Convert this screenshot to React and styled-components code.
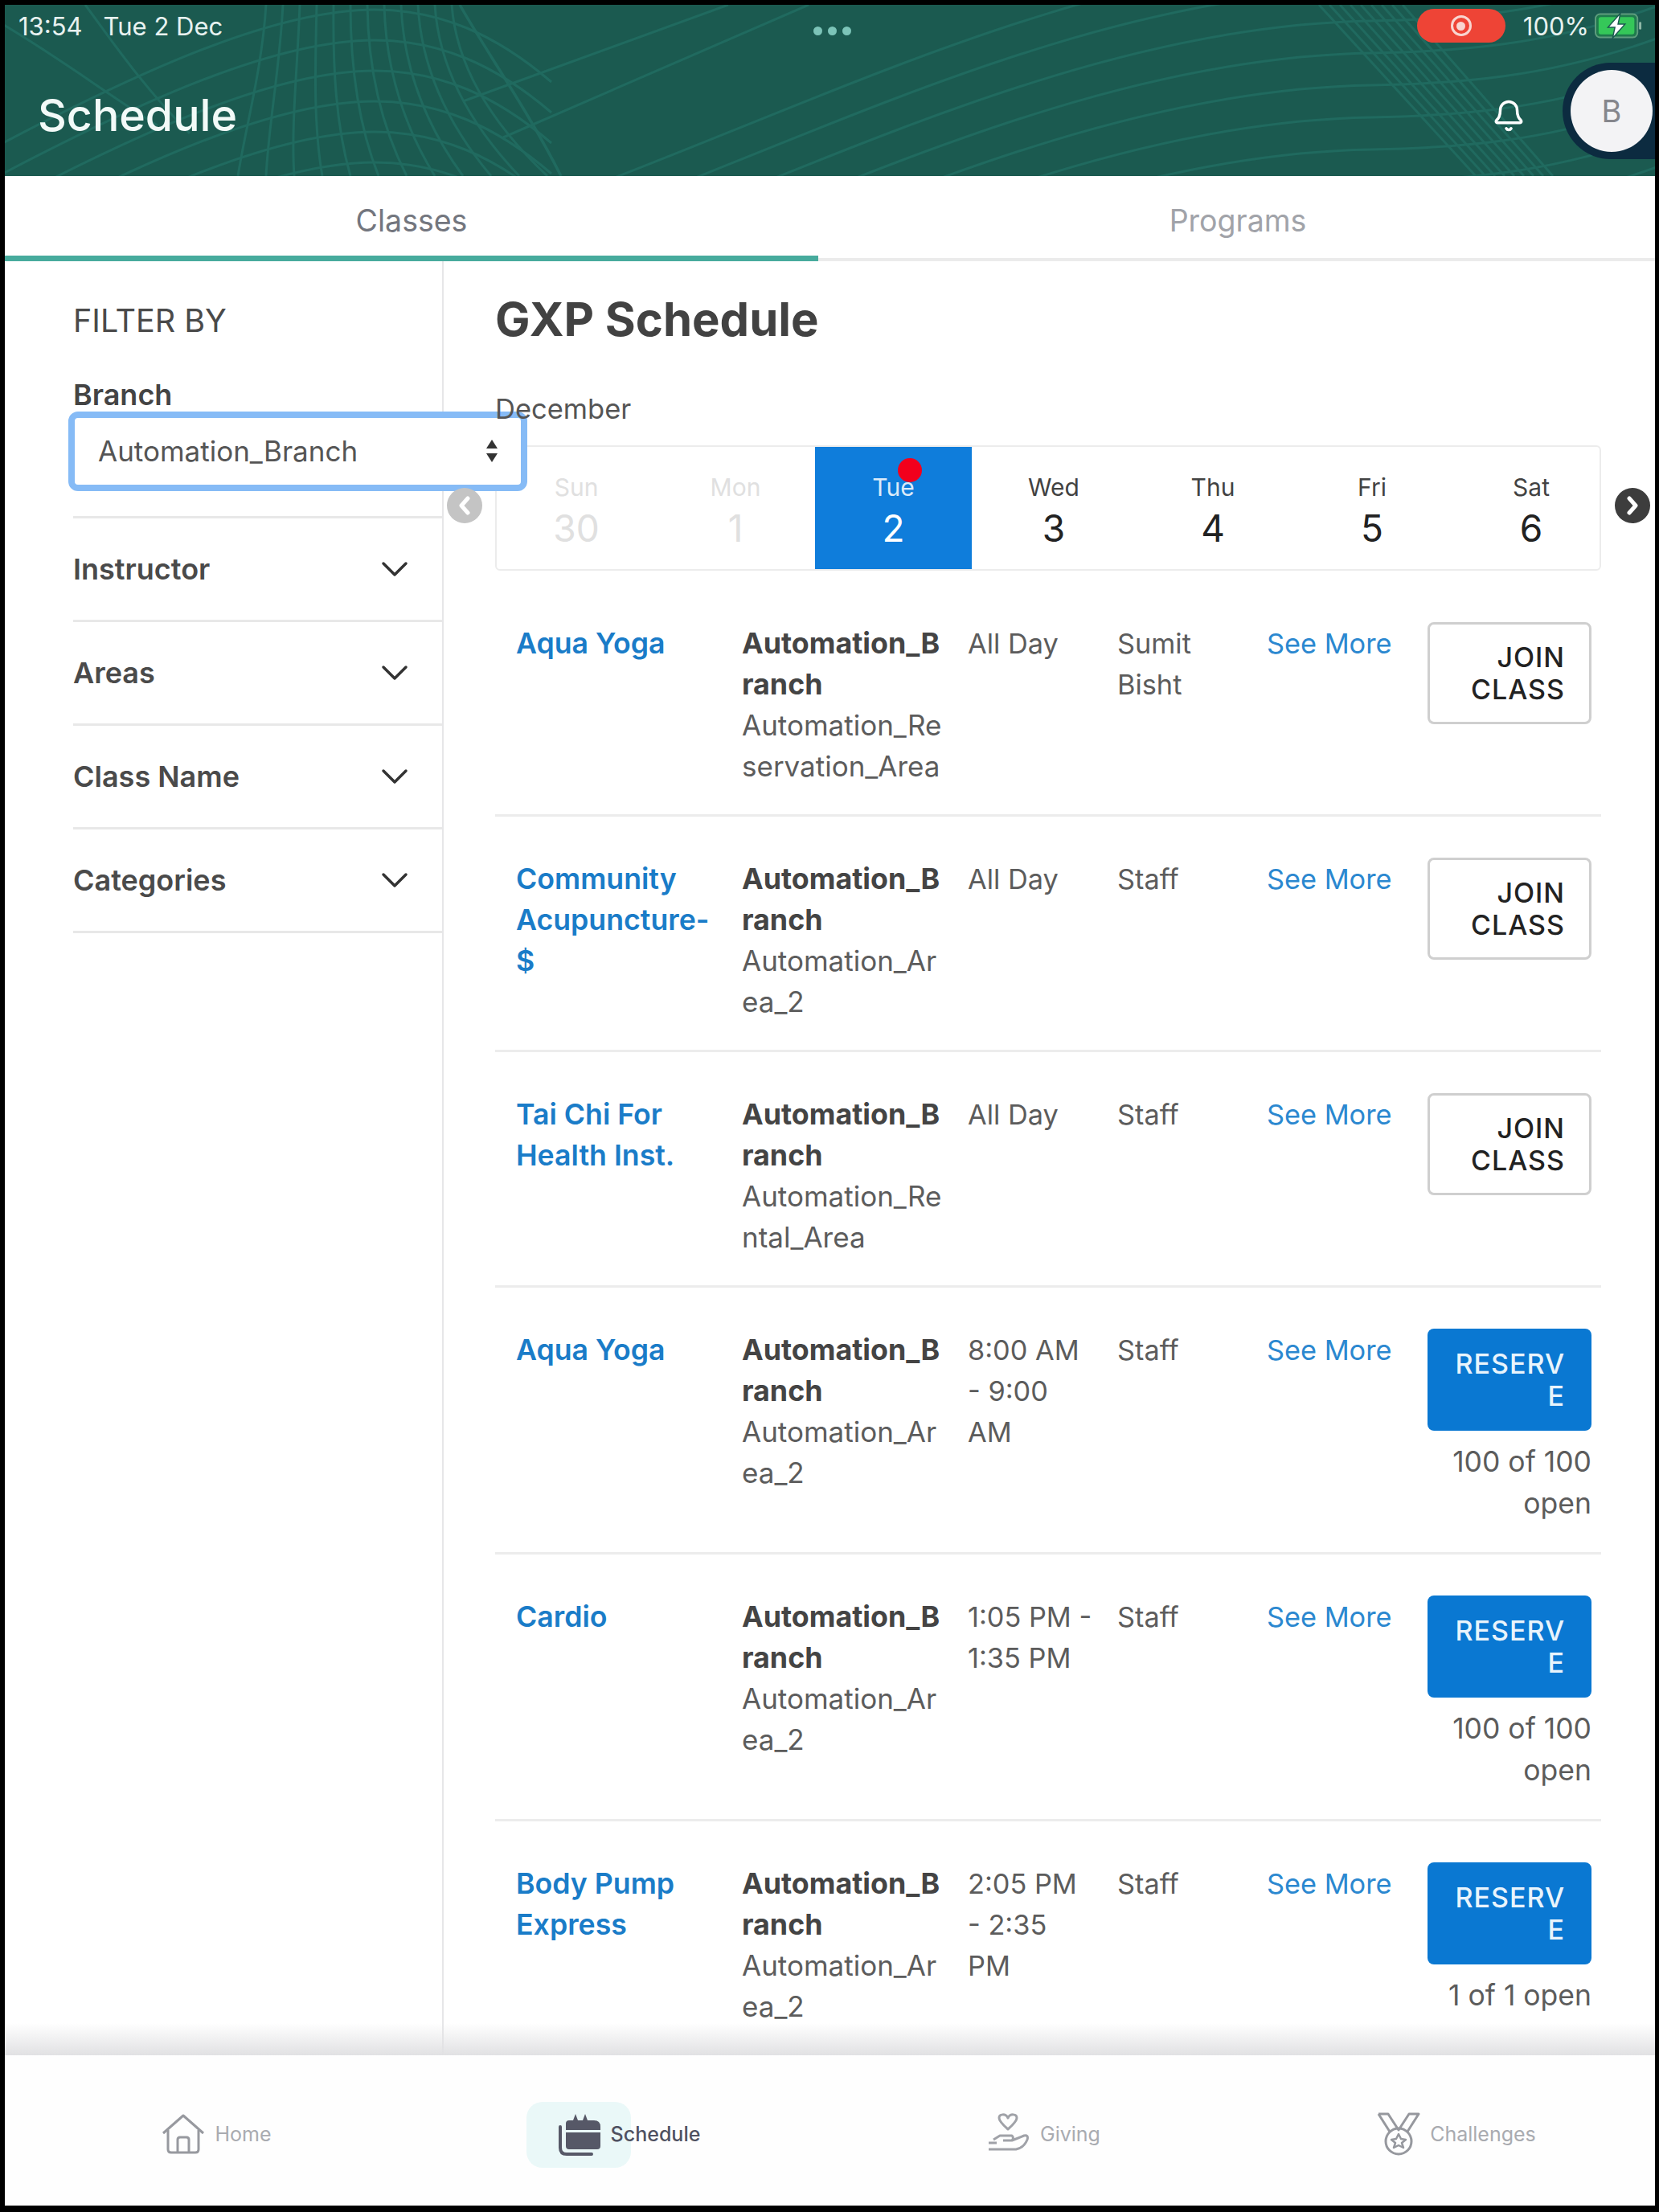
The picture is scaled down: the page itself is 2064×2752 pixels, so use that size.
import React from "react";
import styled, { createGlobalStyle } from "styled-components";
import { Bell, ChevronDown } from "lucide-react";

const GlobalStyle = createGlobalStyle`
  html, body {
    margin: 0;
    padding: 0;
    background: #000;
  }
  * {
    box-sizing: border-box;
  }
`;

const Page = styled.div`
  width: 2064px;
  height: 2752px;
  background: #000;
  padding: 6px 5px 8px 6px;
  font-family: Inter, "Liberation Sans", sans-serif;
`;

const Screen = styled.div`
  width: 100%;
  height: 100%;
  background: #fff;
  display: flex;
  flex-direction: column;
  overflow: hidden;
  position: relative;
`;

const Header = styled.header`
  height: 213px;
  flex-shrink: 0;
  background: #1b5a50;
  position: relative;
  overflow: hidden;
  color: #fff;
`;

const HeaderArt = styled.svg`
  position: absolute;
  top: 0;
  left: 0;
  width: 100%;
  height: 100%;
`;

const StatusBar = styled.div`
  position: relative;
  height: 52px;
  padding: 0 15px 0 17px;
  display: flex;
  align-items: center;
  font-size: 31px;
  color: #e8f2f0;
`;

const StatusDate = styled.span`
  margin-left: 26px;
`;

const Dots = styled.div`
  position: absolute;
  left: 1006px;
  top: 27px;
  display: flex;
  gap: 7px;
`;

const Dot = styled.span`
  width: 11px;
  height: 11px;
  border-radius: 50%;
  background: #7cc4b8;
`;

const StatusRight = styled.div`
  margin-left: auto;
  display: flex;
  align-items: center;
`;

const RecordPill = styled.div`
  width: 110px;
  height: 42px;
  border-radius: 21px;
  background: #ee4436;
  display: flex;
  align-items: center;
  justify-content: center;
  margin-right: 22px;
`;

const RecordIcon = styled.span`
  width: 26px;
  height: 26px;
  border-radius: 50%;
  border: 3px solid #f9d5d0;
  display: flex;
  align-items: center;
  justify-content: center;
  &::after {
    content: "";
    width: 11px;
    height: 11px;
    border-radius: 50%;
    background: #f9d5d0;
  }
`;

const Battery = styled.svg`
  width: 60px;
  height: 32px;
  margin-left: 7px;
`;

const TitleBar = styled.div`
  position: relative;
  height: 161px;
  display: flex;
  align-items: flex-start;
  padding: 50px 0 0 41px;
`;

const Title = styled.h1`
  margin: 0;
  font-size: 55.5px;
  line-height: 70px;
  font-weight: 500;
  color: #f2faf8;
`;

const BellWrap = styled.div`
  position: absolute;
  left: 1850px;
  top: 65px;
  line-height: 0;
`;

const AvatarShell = styled.div`
  position: absolute;
  right: 0;
  top: 20px;
  width: 115px;
  height: 120px;
  background: #0c2b40;
  border-radius: 60px 0 0 60px;
  display: flex;
  align-items: center;
  padding-left: 10px;
`;

const Avatar = styled.div`
  width: 102px;
  height: 102px;
  border-radius: 50%;
  background: #f3f3f5;
  color: #85868c;
  font-size: 38px;
  display: flex;
  align-items: center;
  justify-content: center;
`;

const Tabs = styled.nav`
  height: 106px;
  flex-shrink: 0;
  display: grid;
  grid-template-columns: 1012px 1fr;
`;

const Tab = styled.div`
  display: flex;
  align-items: center;
  justify-content: center;
  font-size: 37.5px;
  padding-top: ${({ $active }) => ($active ? "12px" : "9px")};
  padding-left: ${({ $active }) => ($active ? "0" : "3px")};
  color: ${({ $active }) => ($active ? "#73767e" : "#a1a3a9")};
  border-bottom: ${({ $active }) =>
    $active ? "7px solid #47ab9d" : "4px solid #ebebeb"};
`;

const Body = styled.div`
  flex: 1;
  display: flex;
  min-height: 0;
`;

const Sidebar = styled.aside`
  width: 546px;
  flex-shrink: 0;
  border-right: 2px solid #e6e6e8;
  padding: 52px 0 0 85px;
`;

const FilterHeading = styled.div`
  font-size: 39.5px;
  line-height: 44px;
  color: #4a4a4a;
`;

const BranchLabel = styled.div`
  margin-top: 48px;
  font-size: 36px;
  line-height: 44px;
  font-weight: 600;
  color: #444;
`;

const SelectBox = styled.div`
  position: relative;
  z-index: 2;
  width: 571px;
  height: 99px;
  margin: -1px 0 0 -6px;
  border: 8px solid #86bbf6;
  border-radius: 12px;
  background: #fff;
  display: flex;
  align-items: center;
  justify-content: space-between;
  padding: 0 27px 2px 29px;
  font-size: 35px;
  color: #555;
`;

const SelectArrows = styled.svg`
  width: 18px;
  height: 30px;
`;

const FilterList = styled.div`
  margin-top: 31px;
  border-top: 3px solid #e8e8e8;
`;

const FilterRow = styled.div`
  height: 129px;
  padding: 0 31px 0 0;
  display: flex;
  align-items: center;
  justify-content: space-between;
  border-bottom: 3px solid #e8e8e8;
  font-size: 36px;
  font-weight: 600;
  color: #4a4a4a;
`;

const Main = styled.main`
  flex: 1;
  min-width: 0;
  padding: 0 0 0 64px;
`;

const Heading = styled.h2`
  margin: 0;
  padding-top: 38px;
  font-size: 58px;
  line-height: 68px;
  font-weight: 700;
  color: #424242;
`;

const Month = styled.div`
  position: relative;
  z-index: 3;
  margin-top: 58px;
  font-size: 34.5px;
  line-height: 40px;
  color: #555;
`;

const Calendar = styled.div`
  position: relative;
  width: 1376px;
  height: 156px;
  margin-top: 25px;
  border: 2px solid #ececec;
  border-radius: 6px;
  display: grid;
  grid-template-columns: repeat(7, 198px);
`;

const ArrowButton = styled.span`
  position: absolute;
  top: 51px;
  width: 44px;
  height: 44px;
  border-radius: 50%;
  background: ${({ $muted }) => ($muted ? "#c4c4c4" : "#3d3d3d")};
  display: flex;
  align-items: center;
  justify-content: center;
  ${({ $muted }) => ($muted ? "left: -62px;" : "right: -63px;")}
  z-index: 3;
`;

const Day = styled.div`
  position: relative;
  display: flex;
  flex-direction: column;
  align-items: center;
  padding-top: 32px;
  margin-right: ${({ $selected }) => ($selected ? "3px" : "0")};
  background: ${({ $selected }) => ($selected ? "#0f7ddb" : "transparent")};
  color: ${({ $selected, $past }) =>
    $selected ? "#fff" : $past ? "#e0e0e0" : "#222"};
`;

const DayName = styled.span`
  font-size: 30px;
  line-height: 36px;
  opacity: ${({ $past }) => ($past ? 1 : 0.85)};
`;

const DayNumber = styled.span`
  margin-top: 6px;
  font-size: 46px;
  line-height: 54px;
`;

const RedDot = styled.span`
  position: absolute;
  left: 103px;
  top: 14px;
  width: 30px;
  height: 30px;
  border-radius: 50%;
  background: #f2001c;
`;

const Schedule = styled.div`
  width: 1376px;
  margin-top: 13px;
`;

const Row = styled.div`
  display: grid;
  grid-template-columns: 281px 281px 186px 186px 200px 204px;
  padding: 52px 12px 34px 26px;
  border-bottom: 3px solid #ececec;
  font-size: 34.3px;
  line-height: 51px;
  color: #5c5c5c;
  white-space: pre-line;
`;

const ClassName = styled.div`
  font-size: 35.7px;
  font-weight: 600;
  color: #1a7cc8;
`;

const Branch = styled.div`
  font-size: 35.8px;
  font-weight: 700;
  color: #444;
`;

const AreaName = styled.div`
  font-size: 35px;
`;

const SeeMore = styled.div`
  color: #2b88d0;
`;

const Action = styled.div`
  display: flex;
  flex-direction: column;
  align-items: stretch;
`;

const ClassButton = styled.div`
  height: 127px;
  margin-top: -1px;
  border-radius: 8px;
  padding-right: ${({ $primary }) => ($primary ? "33px" : "30px")};
  display: flex;
  align-items: center;
  justify-content: flex-end;
  text-align: right;
  font-size: 34px;
  line-height: 40px;
  font-weight: 500;
  letter-spacing: 1px;
  border: ${({ $primary }) => ($primary ? "none" : "3px solid #cfcfcf")};
  background: ${({ $primary }) => ($primary ? "#0a78d2" : "#fff")};
  color: ${({ $primary }) => ($primary ? "#e9f4fc" : "#222")};
`;

const Seats = styled.div`
  margin-top: 13px;
  text-align: right;
  font-size: 35.5px;
  line-height: 52px;
`;

const BottomNav = styled.footer`
  position: relative;
  height: 187px;
  flex-shrink: 0;
  background: #fefefe;
  display: grid;
  grid-template-columns: 513px 513px 519px 1fr;
  align-items: center;
  &::before {
    content: "";
    position: absolute;
    left: 0;
    right: 0;
    top: -40px;
    height: 40px;
    background: linear-gradient(rgba(225, 225, 227, 0), rgba(225, 225, 227, 1));
  }
`;

const NavItem = styled.div`
  display: flex;
  align-items: center;
  justify-content: center;
  gap: 12px;
  padding-left: 14px;
  margin-top: 8px;
  font-size: 25px;
  font-weight: ${({ $active }) => ($active ? 500 : 400)};
  color: ${({ $active }) => ($active ? "#4f5161" : "#a9abb0")};
`;

const NavIconWrap = styled.span`
  position: relative;
  display: flex;
  line-height: 0;
  ${({ $active }) =>
    $active &&
    `&::before {
      content: "";
      position: absolute;
      left: -39px;
      top: -13px;
      width: 130px;
      height: 82px;
      border-radius: 20px;
      background: #eaf8f8;
    }`}
`;

const NavIcon = styled.svg`
  position: relative;
  width: 54px;
  height: 54px;
`;

const NavLabel = styled.span`
  position: relative;
`;

const ARC_STEPS = [0, 1, 2, 3, 4, 5, 6];

// curved line pattern behind the header
const HeaderLines = () => (
  <HeaderArt viewBox="0 0 2053 213" fill="none" stroke="#206a5f" strokeWidth="3">
    {[-60, -20, 20, 60, 100, 140, 180, 220, 260].map((y) => (
      <path
        key={`wave-${y}`}
        d={`M 640 ${y + 320} C 1000 ${y + 190}, 1340 ${y + 6}, 1700 ${y} C 1800 ${y - 2}, 1920 ${y - 8}, 2060 ${y - 60}`}
      />
    ))}
    {ARC_STEPS.map((i) => {
      const y = i * 38 + 6;
      return (
        <path
          key={`arc-${i}`}
          d={`M -10 ${y + 170} C 180 ${y + 70}, 340 ${y}, 460 ${y} C 540 ${y}, 610 ${y + 30}, 680 ${y + 90}`}
        />
      );
    })}
    {[0, 1, 2, 3, 4, 5, 6, 7, 8, 9, 10, 11].map((k) => (
      <path
        key={`rib-${k}`}
        d={`M ${325 + k * 21} 0 C ${320 + k * 22} 80, ${300 + k * 28} 150, ${290 + k * 35} 213`}
      />
    ))}
    <path d="M 566 0 C 600 60, 650 130, 692 213" strokeWidth="3.5" />
    <path d="M -10 20 C 60 60, 140 120, 190 150" />
    <path d="M 100 0 C 130 40, 170 100, 230 160" />
    {[0, 1, 2, 3, 4, 5, 6, 7, 8].map((k) => (
      <path key={`band-${k}`} d={`M ${1635 + k * 13} 0 L ${1830 + k * 12} 213`} />
    ))}
    <path d="M 900 0 L 570 120" />
    <path d="M 1000 0 L 620 165" />
  </HeaderArt>
);

const HomeIcon = () => (
  <NavIcon viewBox="0 0 54 54" fill="none" stroke="#97999f" strokeWidth="3" strokeLinejoin="round">
    <path d="M2 26 L27 4 L52 26" />
    <path d="M8 22 V46 Q8 50 12 50 H42 Q46 50 46 46 V22" />
    <path d="M20 50 V34 Q20 31 23 31 H31 Q34 31 34 34 V50" />
  </NavIcon>
);

const CalendarIcon = () => (
  <NavIcon viewBox="0 0 54 54">
    <path
      fill="#565867"
      d="M14 10 H19 L22 2 L25 10 H31 L34 2 L37 10 H45 Q53 10 53 18 V22 H10 V14 Q10 10 14 10 Z M10 25 H53 V42 Q53 46 49 46 H14 Q10 46 10 42 Z"
    />
    <path
      d="M3 18 V44 Q3 52 11 52 H42"
      fill="none"
      stroke="#565867"
      strokeWidth="4"
      strokeLinecap="round"
    />
  </NavIcon>
);

const GivingIcon = () => (
  <NavIcon viewBox="0 0 54 54" fill="none" stroke="#a0a2a8" strokeWidth="3" strokeLinejoin="round">
    <path d="M26 21 C18 14 15 10 15 7 C15 2 23 1 26 7 C29 1 37 2 37 7 C37 10 34 14 26 21 Z" />
    <path d="M8 34 L16 29 H31 Q34 32 31 35 H20" />
    <path d="M31 35 L46 29 Q52 28 50 34 Q46 44 36 46 H2" />
    <path d="M2 38 H12" />
  </NavIcon>
);

const MedalIcon = () => (
  <NavIcon viewBox="0 0 54 54" fill="none" stroke="#96989e" strokeWidth="3" strokeLinejoin="round">
    <path d="M2 2 H14 L27 22 L40 2 H52 L38 24" />
    <path d="M2 2 L16 24" />
    <circle cx="27" cy="36" r="16" />
    <path d="M27 27 L30 33 L36 34 L31 38 L33 44 L27 41 L21 44 L23 38 L18 34 L24 33 Z" strokeWidth="2.5" />
  </NavIcon>
);

const RowArrow = ({ $back }) => (
  <svg width="20" height="24" viewBox="0 0 20 24" fill="none" stroke="#fff" strokeWidth="5" strokeLinecap="round" strokeLinejoin="round">
    <path d={$back ? "M14 3 L6 12 L14 21" : "M6 3 L14 12 L6 21"} />
  </svg>
);

const days = [
  { name: "Sun", num: "30", past: true },
  { name: "Mon", num: "1", past: true },
  { name: "Tue", num: "2", selected: true },
  { name: "Wed", num: "3" },
  { name: "Thu", num: "4" },
  { name: "Fri", num: "5" },
  { name: "Sat", num: "6" },
];

const filters = ["Instructor", "Areas", "Class Name", "Categories"];

const classes = [
  { name: "Aqua Yoga", area: "Automation_Re\nservation_Area", time: "All Day", staff: "Sumit\nBisht", join: true },
  { name: "Community\nAcupuncture-\n$", area: "Automation_Ar\nea_2", time: "All Day", staff: "Staff", join: true },
  { name: "Tai Chi For\nHealth Inst.", area: "Automation_Re\nntal_Area", time: "All Day", staff: "Staff", join: true },
  { name: "Aqua Yoga", area: "Automation_Ar\nea_2", time: "8:00 AM\n- 9:00\nAM", staff: "Staff", seats: "100 of 100\nopen" },
  { name: "Cardio", area: "Automation_Ar\nea_2", time: "1:05 PM -\n1:35 PM", staff: "Staff", seats: "100 of 100\nopen" },
  { name: "Body Pump\nExpress", area: "Automation_Ar\nea_2", time: "2:05 PM\n- 2:35\nPM", staff: "Staff", seats: "1 of 1 open" },
];

const navItems = [
  { label: "Home", icon: <HomeIcon /> },
  { label: "Schedule", icon: <CalendarIcon />, active: true },
  { label: "Giving", icon: <GivingIcon /> },
  { label: "Challenges", icon: <MedalIcon /> },
];

export default function App() {
  return (
    <Page>
      <GlobalStyle />
      <Screen>
        <Header>
          <HeaderLines />
          <StatusBar>
            <span>13:54</span>
            <StatusDate>Tue 2 Dec</StatusDate>
            <Dots>
              <Dot />
              <Dot />
              <Dot />
            </Dots>
            <StatusRight>
              <RecordPill>
                <RecordIcon />
              </RecordPill>
              <span>100%</span>
              <Battery viewBox="0 0 62 32">
                <rect x="1" y="1" width="54" height="30" rx="6" fill="#1f7a4d" stroke="#5f9c7e" strokeWidth="2" />
                <rect x="5" y="5" width="46" height="22" rx="3" fill="#35c759" />
                <rect x="57" y="11" width="3" height="10" rx="1.5" fill="#8fb8a6" />
                <path d="M33 0 L17 18 H26 L23 32 L39 14 H30 Z" fill="#fff" stroke="#1b5a50" strokeWidth="1.5" />
              </Battery>
            </StatusRight>
          </StatusBar>
          <TitleBar>
            <Title>Schedule</Title>
            <BellWrap>
              <Bell size={42} strokeWidth={2} color="#fff" />
            </BellWrap>
            <AvatarShell>
              <Avatar>B</Avatar>
            </AvatarShell>
          </TitleBar>
        </Header>

        <Tabs>
          <Tab $active>Classes</Tab>
          <Tab>Programs</Tab>
        </Tabs>

        <Body>
          <Sidebar>
            <FilterHeading>FILTER BY</FilterHeading>
            <BranchLabel>Branch</BranchLabel>
            <SelectBox>
              Automation_Branch
              <SelectArrows viewBox="0 0 18 30">
                <path d="M9 1 L16 12 H2 Z M2 18 H16 L9 29 Z" fill="#333" />
              </SelectArrows>
            </SelectBox>
            <FilterList>
              {filters.map((f) => (
                <FilterRow key={f}>
                  {f}
                  <ChevronDown size={56} strokeWidth={1.5} color="#333" />
                </FilterRow>
              ))}
            </FilterList>
          </Sidebar>

          <Main>
            <Heading>GXP Schedule</Heading>
            <Month>December</Month>
            <Calendar>
              <ArrowButton $muted>
                <RowArrow $back />
              </ArrowButton>
              {days.map((d) => (
                <Day key={d.name} $selected={d.selected} $past={d.past}>
                  <DayName $past={d.past}>{d.name}</DayName>
                  <DayNumber>{d.num}</DayNumber>
                  {d.selected && <RedDot />}
                </Day>
              ))}
              <ArrowButton>
                <RowArrow />
              </ArrowButton>
            </Calendar>
            <Schedule>
              {classes.map((c, i) => (
                <Row key={i}>
                  <ClassName>{c.name}</ClassName>
                  <div>
                    <Branch>{"Automation_B\nranch"}</Branch>
                    <AreaName>{c.area}</AreaName>
                  </div>
                  <div>{c.time}</div>
                  <div>{c.staff}</div>
                  <SeeMore>See More</SeeMore>
                  <Action>
                    <ClassButton $primary={!c.join}>
                      {c.join ? "JOIN\nCLASS" : "RESERV\nE"}
                    </ClassButton>
                    {c.seats && <Seats>{c.seats}</Seats>}
                  </Action>
                </Row>
              ))}
            </Schedule>
          </Main>
        </Body>

        <BottomNav>
          {navItems.map((n) => (
            <NavItem key={n.label} $active={n.active}>
              <NavIconWrap $active={n.active}>{n.icon}</NavIconWrap>
              <NavLabel>{n.label}</NavLabel>
            </NavItem>
          ))}
        </BottomNav>
      </Screen>
    </Page>
  );
}
